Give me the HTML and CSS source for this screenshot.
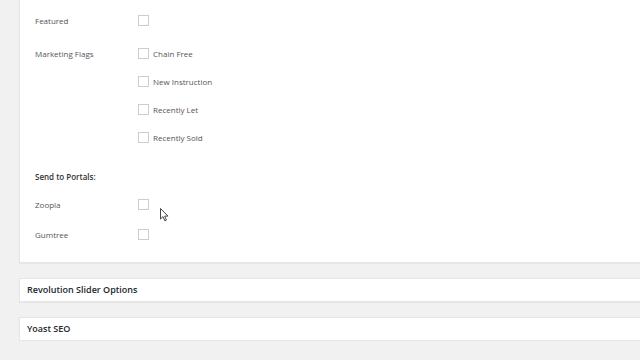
FILE: index.html
```html
<!DOCTYPE html>
<html lang="en">
  <head>
    <meta charset="UTF-8" />
    <meta name="viewport" content="width=device-width, initial-scale=1.0" />
    <title>Property Details</title>
    <link rel="stylesheet" href="styles.css">
  </head>
  <body>
    <div class="wrap">
      <div class="postbox details">
        <div class="row featured">
          <div class="label">Featured</div>
          <div class="value"><input type="checkbox" /></div>
        </div>
        <div class="row">
          <div class="label">Marketing Flags</div>
          <div class="value options">
            <label><input type="checkbox" /> Chain Free</label>
            <label><input type="checkbox" /> New Instruction</label>
            <label><input type="checkbox" /> Recently Let</label>
            <label><input type="checkbox" /> Recently Sold</label>
          </div>
        </div>
        <div class="heading">Send to Portals:</div>
        <div class="row portal">
          <div class="label">Zoopla</div>
          <div class="value"><input type="checkbox" /></div>
        </div>
        <div class="row portal gumtree">
          <div class="label">Gumtree</div>
          <div class="value"><input type="checkbox" /></div>
        </div>
        <svg class="cursor" width="10" height="14" viewBox="0 0 10 14">
          <path d="M0.5 0.5 L0.5 11 L3 8.6 L4.8 12.8 L6.4 12.1 L4.7 8.1 L8 8.1 Z" fill="#fff" stroke="#333" stroke-width="0.9" stroke-linejoin="round" />
        </svg>
      </div>
      <div class="postbox closed">
        <h2>Revolution Slider Options</h2>
      </div>
      <div class="postbox closed">
        <h2>Yoast SEO</h2>
      </div>
    </div>
  </body>
</html>
```

FILE: styles.css
```css
body {
  margin: 0;
  background: #f1f1f1;
  font-family: "Open Sans", "Noto Sans", sans-serif;
  color: #555;
  overflow: hidden;
}
.wrap {
  padding-left: 19px;
}
.postbox {
  background: #fff;
  border: 1px solid #e5e5e5;
  border-right: 0;
  box-shadow: 0 1px 1px rgba(0, 0, 0, 0.04);
}
.details {
  position: relative;
  border-top: 0;
  padding: 15px 16px 22px 15px;
}
.row {
  display: flex;
  align-items: flex-start;
  font-size: 8px;
  line-height: 11px;
}
.label {
  width: 103px;
}
.featured {
  margin-bottom: 22px;
}
.options {
  display: flex;
  flex-direction: column;
  gap: 17px;
}
.options label {
  display: flex;
  align-items: center;
  gap: 4px;
}
input[type="checkbox"] {
  appearance: none;
  display: block;
  width: 11px;
  height: 11px;
  margin: 0;
  border: 1px solid #cdcdcd;
  background: #fff;
  box-sizing: border-box;
}
.heading {
  margin-top: 28px;
  font-size: 8px;
  line-height: 11px;
  font-weight: 600;
  color: #333;
}
.portal {
  margin-top: 17px;
}
.gumtree {
  margin-top: 19px;
}
.cursor {
  position: absolute;
  left: 140px;
  top: 208px;
}
.closed {
  margin-top: 15px;
}
.closed h2 {
  margin: 0;
  padding: 0 7px;
  height: 22px;
  line-height: 22px;
  font-size: 9px;
  font-weight: 600;
  color: #23282d;
}
```
